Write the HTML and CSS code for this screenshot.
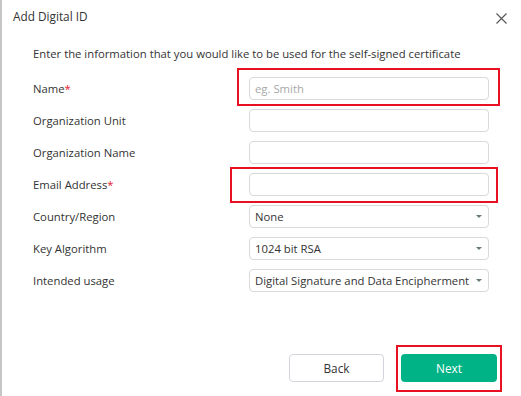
FILE: index.html
```html
<!DOCTYPE html>
<html lang="en">
<head>
    <meta charset="UTF-8">
    <title>Add Digital ID</title>
    <link rel="stylesheet" href="styles.css">
</head>
<body>

<div class="dialog">
    <div class="header">
        <span class="title">Add Digital ID</span>
        <i class="close">
            <svg width="11" height="11" viewBox="0 0 11 11"><path d="M0.5 0.5 L10.5 10.5 M10.5 0.5 L0.5 10.5" stroke="#555" stroke-width="1.1" fill="none"/></svg>
        </i>
    </div>

    <div class="intro">Enter the information that you would like to be used for the self-signed certificate</div>

    <div class="form">
        <div class="row">
            <span>Name<em>*</em></span>
            <div class="field">
                <input type="text" name="name" placeholder="eg. Smith">
                <b class="mark mark-name"></b>
            </div>
        </div>
        <div class="row">
            <span>Organization Unit</span>
            <div class="field"><input type="text" name="unit"></div>
        </div>
        <div class="row">
            <span>Organization Name</span>
            <div class="field"><input type="text" name="org"></div>
        </div>
        <div class="row">
            <span>Email Address<em>*</em></span>
            <div class="field">
                <input type="text" name="email">
                <b class="mark mark-email"></b>
            </div>
        </div>
        <div class="row">
            <span>Country/Region</span>
            <div class="field"><div class="select">None<i></i></div></div>
        </div>
        <div class="row">
            <span>Key Algorithm</span>
            <div class="field"><div class="select">1024 bit RSA<i></i></div></div>
        </div>
        <div class="row">
            <span>Intended usage</span>
            <div class="field"><div class="select">Digital Signature and Data Encipherment<i></i></div></div>
        </div>
    </div>

    <div class="footer">
        <button class="btn back">Back</button>
        <div class="next-wrap">
            <button class="btn next">Next</button>
            <b class="mark mark-next"></b>
        </div>
    </div>
</div>

</body>
</html>
```

FILE: styles.css
```css
* {
    padding: 0;
    margin: 0;
    box-sizing: border-box;
}
body {
    font-family: "Open Sans", "Noto Sans", sans-serif;
    font-size: 11.3px;
    color: #333;
    background: #fff;
}
.dialog {
    width: 521px;
    height: 396px;
    border-left: 2px solid #c6c6c6;
    display: flex;
    flex-direction: column;
}
.header {
    height: 34px;
    padding: 6px 14px 0 11px;
    display: flex;
    justify-content: space-between;
}
.header .title {
    font-size: 11.8px;
    line-height: 20px;
}
.header .close {
    padding-top: 6px;
}
.intro {
    padding-left: 31px;
    line-height: 20px;
    margin-top: 10px;
}
.form {
    margin-top: 8px;
    padding-left: 31px;
}
.form .row {
    height: 32px;
    display: flex;
    align-items: center;
}
.form .row span {
    width: 216px;
}
.form .row em {
    font-style: normal;
    color: #e5202e;
}
.field {
    position: relative;
    width: 240px;
}
.field input,
.field .select {
    width: 240px;
    height: 23px;
    border: 1px solid #d9d9d9;
    border-radius: 4px;
    font-family: inherit;
    font-size: 11.3px;
    color: #333;
    padding-left: 5px;
    outline: none;
}
.field input::placeholder {
    color: #a8a8a8;
}
.field .select {
    line-height: 21px;
    position: relative;
    white-space: nowrap;
}
.field .select i {
    position: absolute;
    right: 6px;
    top: 9px;
    border-left: 3px solid transparent;
    border-right: 3px solid transparent;
    border-top: 3px solid #6a7a7a;
}
.mark {
    position: absolute;
    border: 2px solid #e81123;
    pointer-events: none;
}
.mark-name {
    left: -12px;
    right: -11px;
    top: -9px;
    bottom: -6px;
}
.mark-email {
    left: -19px;
    right: -9px;
    top: -6px;
    bottom: -7px;
}
.footer {
    margin-top: auto;
    margin-bottom: 14px;
    padding-right: 24px;
    display: flex;
    justify-content: flex-end;
    align-items: center;
    gap: 17px;
}
.btn {
    height: 28px;
    border-radius: 4px;
    font-family: inherit;
    font-size: 11.8px;
    cursor: pointer;
}
.btn.back {
    width: 95px;
    border: 1px solid #d4d4dc;
    background: #fff;
    color: #333;
}
.next-wrap {
    position: relative;
}
.btn.next {
    width: 96px;
    border: none;
    background: #00b386;
    color: #fff;
    display: block;
}
.mark-next {
    left: -5px;
    right: -5px;
    top: -9px;
    bottom: -10px;
}
```
